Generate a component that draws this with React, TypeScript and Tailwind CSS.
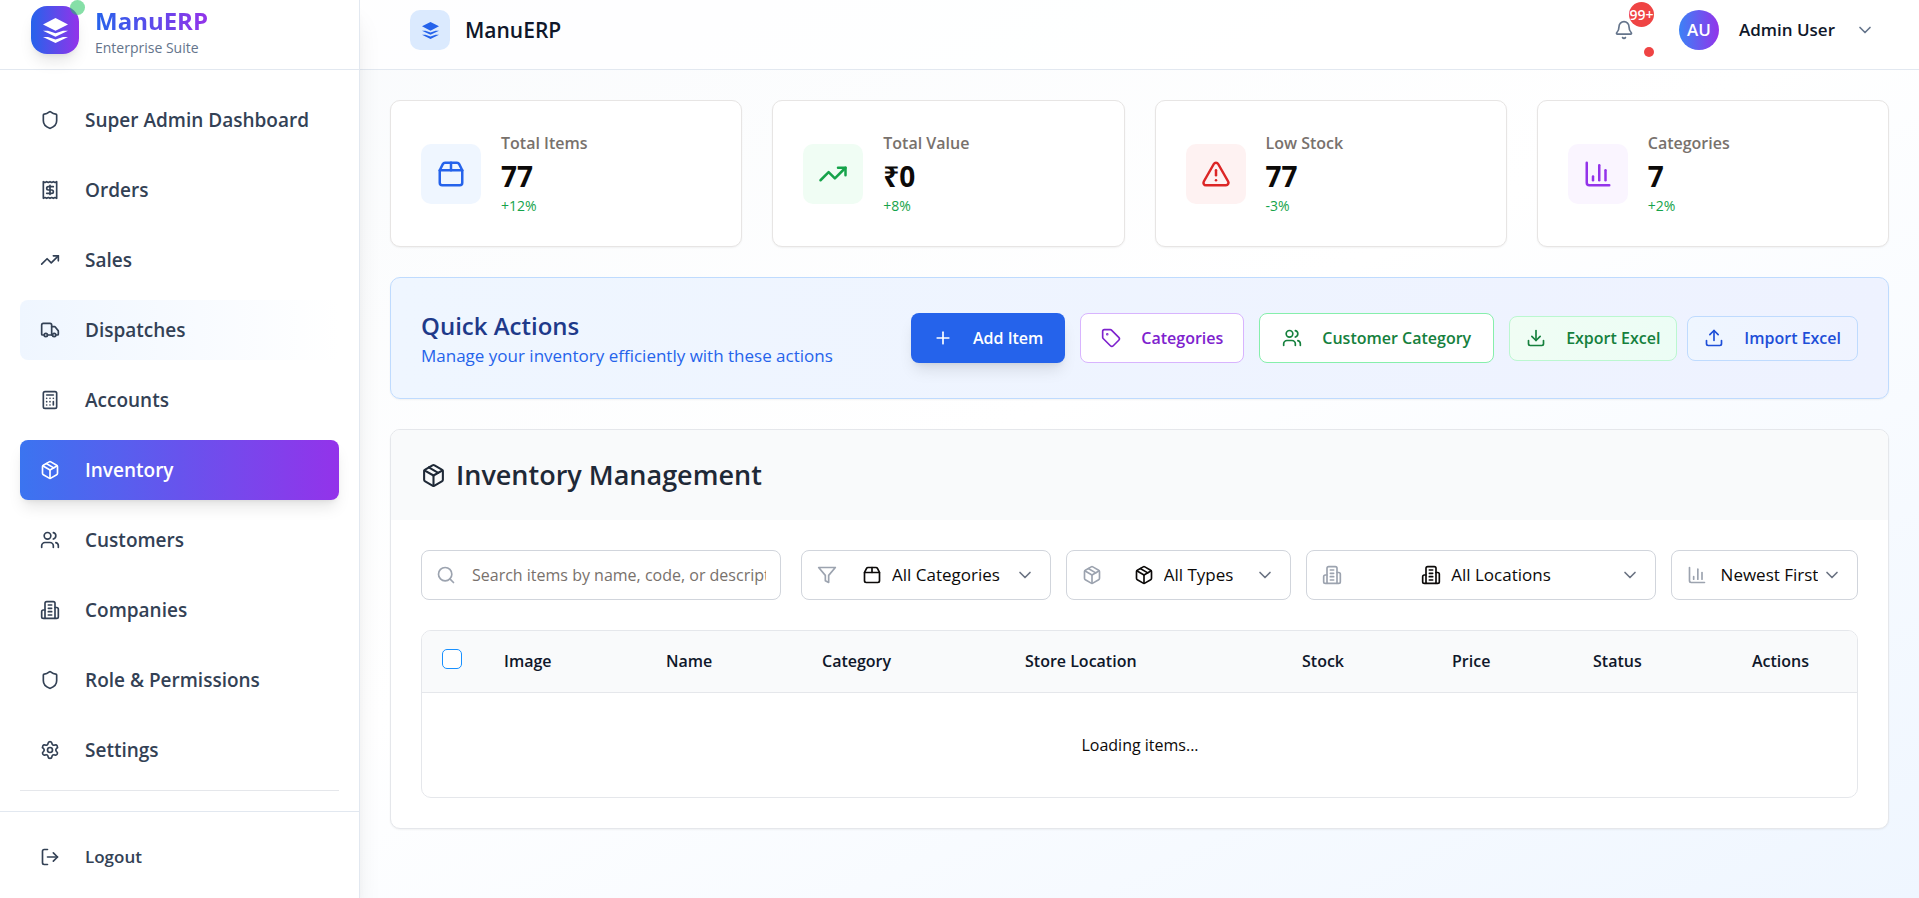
import React from 'react'
import {
    Bell,
    Calculator,
    ChartColumn,
    ChevronDown,
    Download,
    LogOut,
    Package,
    Package2,
    Plus,
    Receipt,
    Search,
    Settings,
    Shield,
    Tag,
    TrendingUp,
    TriangleAlert,
    Truck,
    Upload,
    Users,
} from 'lucide-react'

type Icon = React.ComponentType<{ className?: string }>

function Building({ className }: { className?: string }) {
    return (
        <svg viewBox="0 0 24 24" fill="none" stroke="currentColor" strokeWidth="2" strokeLinecap="round" strokeLinejoin="round" className={className} aria-hidden="true">
            <path d="M6 22V4a2 2 0 0 1 2-2h8a2 2 0 0 1 2 2v18Z" />
            <path d="M6 12H4a2 2 0 0 0-2 2v6a2 2 0 0 0 2 2h2" />
            <path d="M18 9h2a2 2 0 0 1 2 2v9a2 2 0 0 1-2 2h-2" />
            <path d="M10 6h4" />
            <path d="M10 10h4" />
            <path d="M10 14h4" />
            <path d="M10 18h4" />
        </svg>
    )
}

function FilterIcon({ className }: { className?: string }) {
    return (
        <svg viewBox="0 0 24 24" fill="none" stroke="currentColor" strokeWidth="2" strokeLinecap="round" strokeLinejoin="round" className={className} aria-hidden="true">
            <polygon points="22 3 2 3 10 12.46 10 19 14 21 14 12.46 22 3" />
        </svg>
    )
}

function Logo({ className }: { className?: string }) {
    return (
        <svg viewBox="0 0 25 25" fill="currentColor" className={className} aria-hidden="true">
            <path d="M12.5 0 25 6.4 12.5 12.8 0 6.4z" />
            <path d="M0 12.7h5l7.5 2.6 7.5-2.6h5L12.5 18.8z" />
            <path d="M0 18.9h5l7.5 2.6 7.5-2.6h5L12.5 25z" />
        </svg>
    )
}

const menu: { label: string; icon: Icon; className?: string }[] = [
    { label: 'Super Admin Dashboard', icon: Shield },
    { label: 'Orders', icon: Receipt },
    { label: 'Sales', icon: TrendingUp },
    { label: 'Dispatches', icon: Truck, className: 'bg-linear-to-r/srgb from-[#eff6ff] to-white text-[#334155]' },
    { label: 'Accounts', icon: Calculator },
    { label: 'Inventory', icon: Package, className: 'bg-linear-to-r/srgb from-[#3b74f0] to-[#9333ea] text-white shadow-lg' },
    { label: 'Customers', icon: Users },
    { label: 'Companies', icon: Building },
    { label: 'Role & Permissions', icon: Shield },
    { label: 'Settings', icon: Settings },
]

const stats = [
    { label: 'Total Items', value: '77', change: '+12%', icon: Package2, color: 'bg-[#eff6ff] text-[#2563eb]' },
    { label: 'Total Value', value: '₹0', change: '+8%', icon: TrendingUp, color: 'bg-[#f0fdf4] text-[#16a34a]' },
    { label: 'Low Stock', value: '77', change: '-3%', icon: TriangleAlert, color: 'bg-[#fef2f2] text-[#dc2626]' },
    { label: 'Categories', value: '7', change: '+2%', icon: ChartColumn, color: 'bg-[#faf5ff] text-[#9333ea]' },
]

const filters: { label: string; side: Icon; icon?: Icon; width: string }[] = [
    { label: 'All Categories', side: FilterIcon, icon: Package2, width: 'w-[250px]' },
    { label: 'All Types', side: Package, icon: Package, width: 'w-[225px]' },
    { label: 'All Locations', side: Building, icon: Building, width: 'w-[350px]' },
    { label: 'Newest First', side: ChartColumn, width: 'w-[187px]' },
]

const columns = [
    { label: 'Image', width: 'w-[162px]' },
    { label: 'Name', width: 'w-[156px]' },
    { label: 'Category', width: 'w-[203px]' },
    { label: 'Store Location', width: 'w-[277px]' },
    { label: 'Stock', width: 'w-[150px]' },
    { label: 'Price', width: 'w-[141px]' },
    { label: 'Status', width: 'w-[159px]' },
    { label: 'Actions', width: 'w-[126px]' },
]

function Sidebar() {
    return (
        <aside className="sticky top-0 flex h-screen w-[360px] shrink-0 flex-col border-r border-slate-200 bg-white shadow-xl">
            <div className="flex h-[70px] shrink-0 items-start gap-4 border-b border-slate-200 pt-[6px] pl-[31px]">
                <div className="relative flex size-12 items-center justify-center rounded-2xl bg-linear-to-r/srgb from-[#2563eb] to-[#9333ea] text-white shadow-lg">
                    <Logo className="size-[25px]" />
                    <span className="absolute -top-[6px] -right-[6px] size-[15px] rounded-full bg-[#22c55e]/55" />
                </div>
                <div>
                    <p className="w-fit bg-linear-to-r/srgb from-[#2563eb] to-[#9333ea] bg-clip-text text-[24px] leading-[30px] font-bold text-transparent">
                        ManuERP
                    </p>
                    <p className="text-[14px] leading-6 text-[#64748b]">Enterprise Suite</p>
                </div>
            </div>
            <nav className="flex flex-1 flex-col gap-[10px] px-5 pt-5">
                {menu.map((item) => (
                    <a
                        key={item.label}
                        href="#"
                        className={`flex h-[60px] items-center gap-[25px] rounded-lg px-5 text-[19px] font-semibold ${item.className ?? 'text-[#334155]'}`}
                    >
                        <item.icon className="size-5" />
                        {item.label}
                    </a>
                ))}
                <hr className="border-gray-200" />
            </nav>
            <div className="shrink-0 border-t border-slate-200 px-5 pt-5 pb-4">
                <button className="flex h-[50px] w-full items-center gap-[25px] px-5 text-[17px] font-semibold text-[#334155]">
                    <LogOut className="size-5" />
                    Logout
                </button>
            </div>
        </aside>
    )
}

function Header() {
    return (
        <header className="flex h-[70px] items-start justify-between border-b border-slate-200 bg-white/80 pt-[10px] pr-[44px] pl-[50px]">
            <div className="flex items-center gap-[15px]">
                <div className="flex size-10 items-center justify-center rounded-[10px] bg-[#dbeafe] text-[#2563eb]">
                    <Logo className="size-[17px]" />
                </div>
                <h1 className="text-[21px] leading-10 font-semibold text-[#0f172a]">ManuERP</h1>
            </div>
            <div className="flex items-center">
                <button aria-label="Notifications" className="relative mr-[45px] flex h-10 items-center text-[#64748b]">
                    <Bell className="size-5" />
                    <span className="absolute -top-2 left-[15px] flex size-[25px] items-center justify-center rounded-full bg-[#ef4444] text-[14px] font-semibold text-white">
                        99+
                    </span>
                    <span className="absolute -bottom-[7px] left-[30px] size-[10px] rounded-full bg-[#ef4444]" />
                </button>
                <button className="flex h-10 items-center gap-5 text-[17px] font-semibold text-[#0f172a]">
                    <span className="flex size-10 items-center justify-center rounded-full bg-linear-to-r/srgb from-[#3b82f6] to-[#9333ea] text-white">
                        AU
                    </span>
                    Admin User
                    <ChevronDown className="size-5 text-[#64748b]" />
                </button>
            </div>
        </header>
    )
}

export default function App() {
    return (
        <div className="flex min-h-screen bg-linear-to-br/srgb from-[#f8fafc] via-white to-[#eff6ff] font-['Open_Sans','Noto_Sans',sans-serif] text-[17px] text-stone-950">
            <Sidebar />
            <div className="min-w-0 flex-1">
                <Header />
                <main className="space-y-[30px] p-[30px]">
                    {/* Stats */}
                    <div className="grid grid-cols-4 gap-[30px]">
                        {stats.map((stat) => (
                            <div key={stat.label} className="flex items-center gap-5 rounded-[10px] border border-stone-200 bg-white p-[30px] shadow-xs">
                                <div className={`flex size-[60px] items-center justify-center rounded-[10px] ${stat.color}`}>
                                    <stat.icon className="size-[30px]" />
                                </div>
                                <div>
                                    <p className="text-[16px] leading-[25px] font-semibold text-[#78716c]">{stat.label}</p>
                                    <p className="text-[28px] leading-10 font-bold">{stat.value}</p>
                                    <p className="text-[14px] leading-5 text-[#16a34a]">{stat.change}</p>
                                </div>
                            </div>
                        ))}
                    </div>

                    {/* Quick actions */}
                    <section className="flex items-center justify-between rounded-[10px] border border-[#bfdbfe] bg-linear-to-r/srgb from-[#eff6ff] to-[#eef2ff] p-[30px] shadow-xs">
                        <div>
                            <h2 className="text-[24px] leading-[35px] font-semibold text-[#1e3a8a]">Quick Actions</h2>
                            <p className="leading-[25px] text-[#2563eb]">Manage your inventory efficiently with these actions</p>
                        </div>
                        <div className="flex items-center gap-[15px] text-[16px] font-semibold">
                            <button className="flex h-[50px] items-center gap-5 rounded-lg bg-[#2563eb] px-[22px] text-white shadow-lg">
                                <Plus className="size-5" />
                                Add Item
                            </button>
                            <button className="flex h-[50px] items-center gap-5 rounded-lg border border-[#d8b4fe] bg-white px-5 text-[#7e22ce]">
                                <Tag className="size-5" />
                                Categories
                            </button>
                            <button className="flex h-[50px] items-center gap-5 rounded-lg border border-[#86efac] bg-white px-[22px] text-[#15803d]">
                                <Users className="size-5" />
                                Customer Category
                            </button>
                            <div className="flex gap-[10px]">
                                <button className="flex h-[45px] items-center gap-5 rounded-lg border border-[#bbf7d0] bg-linear-to-r/srgb from-[#f0fdf4] to-[#ecfdf5] px-4 text-[#15803d]">
                                    <Download className="size-5" />
                                    Export Excel
                                </button>
                                <button className="flex h-[45px] items-center gap-5 rounded-lg border border-[#bfdbfe] bg-linear-to-r/srgb from-[#eff6ff] to-[#eef2ff] px-4 text-[#1d4ed8]">
                                    <Upload className="size-5" />
                                    Import Excel
                                </button>
                            </div>
                        </div>
                    </section>

                    {/* Inventory */}
                    <section className="overflow-hidden rounded-[10px] border border-gray-200 bg-white shadow-xs">
                        <h2 className="flex items-center gap-[10px] bg-gray-50 p-[30px] text-[27px] leading-[30px] font-semibold text-[#1f2937]">
                            <Package className="size-[25px]" />
                            Inventory Management
                        </h2>
                        <div className="space-y-[30px] p-[30px]">
                            <div className="flex gap-[15px]">
                                <label className="mr-[5px] flex h-[50px] min-w-0 flex-1 items-center gap-4 rounded-lg border border-gray-300 px-[14px]">
                                    <Search className="size-5 shrink-0 text-[#9ca3af]" />
                                    <input
                                        type="text"
                                        aria-label="Search items"
                                        placeholder="Search items by name, code, or description..."
                                        className="w-full min-w-0 text-[16px] outline-none placeholder:text-[#78716c]"
                                    />
                                </label>
                                {filters.map((filter) => (
                                    <label
                                        key={filter.label}
                                        className={`flex h-[50px] shrink-0 items-center justify-between rounded-lg border border-gray-300 px-[15px] ${filter.width}`}
                                    >
                                        <span className="w-[30px] shrink-0 text-[#9ca3af]">
                                            <filter.side className="size-5" />
                                        </span>
                                        <span className="flex items-center gap-[10px]">
                                            {filter.icon && <filter.icon className="size-5" />}
                                            <select aria-label={filter.label} className="field-sizing-content appearance-none outline-none">
                                                <option>{filter.label}</option>
                                            </select>
                                        </span>
                                        <ChevronDown className="size-5 shrink-0 text-gray-500" />
                                    </label>
                                ))}
                            </div>

                            <div className="overflow-hidden rounded-[10px] border border-gray-200">
                                <table className="w-full table-fixed text-left">
                                    <thead>
                                        <tr className="h-[61px] border-b border-gray-200 bg-gray-50 text-[16px] text-[#0f172a]">
                                            <th className="w-[62px] pb-1 pl-5">
                                                <input
                                                    type="checkbox"
                                                    aria-label="Select all items"
                                                    className="block size-5 appearance-none rounded-[5px] border border-[#1890ff] bg-white"
                                                />
                                            </th>
                                            {columns.map((column) => (
                                                <th key={column.label} className={`pl-5 font-semibold ${column.width}`}>
                                                    {column.label}
                                                </th>
                                            ))}
                                        </tr>
                                    </thead>
                                    <tbody>
                                        <tr className="h-[105px]">
                                            <td colSpan={9} className="text-center text-[16px]">Loading items...</td>
                                        </tr>
                                    </tbody>
                                </table>
                            </div>
                        </div>
                    </section>
                </main>
            </div>
        </div>
    )
}
